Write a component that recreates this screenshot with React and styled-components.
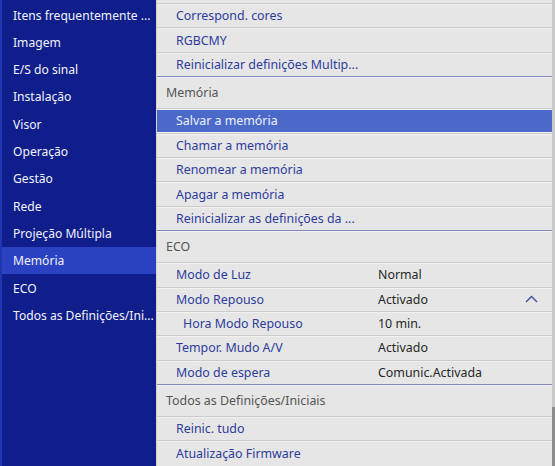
import React from "react";
import styled, { createGlobalStyle } from "styled-components";

const Global = createGlobalStyle`
  html, body { margin: 0; padding: 0; background: #e6e6e6; }
  body { font-family: "Noto Sans", "Open Sans", sans-serif; }
  * { box-sizing: border-box; }
`;

const Screen = styled.div`
  display: flex;
  width: 555px;
  height: 466px;
  overflow: hidden;
  font-size: 12.4px;
`;

const Sidebar = styled.nav`
  width: 156px;
  flex: none;
  background: #0f1e8b;
  border-left: 2px solid #1f36b0;
  padding-top: 1.4px;
  display: flex;
  flex-direction: column;
  font-size: 12.1px;
`;

const SideItem = styled.div`
  height: 27.3px;
  flex: none;
  display: flex;
  align-items: center;
  padding-left: 11px;
  color: #f2f2f8;
  white-space: nowrap;
  background: ${(p) => (p.$active ? "#2a41c2" : "transparent")};
`;

const Panel = styled.div`
  flex: 1;
  display: flex;
  background: #e6e6e6;
  border-left: 1px solid #d4d4d4;
`;

const List = styled.div`
  flex: 1;
  display: flex;
  flex-direction: column;
  padding-top: 3px;
`;

const Row = styled.div`
  height: ${(p) => (p.$header ? "32px" : "24.4px")};
  flex: none;
  display: flex;
  align-items: center;
  padding-left: ${(p) => (p.$header ? "9px" : p.$sub ? "26px" : "19px")};
  padding-right: 14px;
  border-top: ${(p) => (p.$section ? "1px solid #7f88b8" : "1px solid #cbcbcb")};
  color: ${(p) => (p.$header ? "#555" : p.$selected ? "#eef0ff" : "#2d3c9c")};
  background: ${(p) => (p.$selected ? "#4b69c9" : "transparent")};
  box-shadow: ${(p) =>
    p.$selected ? "inset 0 1px 0 #f2f2f2, inset 0 -1px 0 #f2f2f2" : "inset 0 1px 0 #f1f1f1"};
  white-space: nowrap;
`;

const Label = styled.span`
  width: ${(p) => (p.$sub ? "195px" : "202px")};
  flex: none;
`;

const Value = styled.span`
  flex: 1;
  color: #262626;
`;

const Chevron = styled.svg`
  width: 13px;
  height: 8px;
  flex: none;
`;

const Track = styled.div`
  width: 3px;
  flex: none;
  background: #c9c9c9;
  display: flex;
  flex-direction: column;
  padding-top: 407px;
`;

const Thumb = styled.div`
  flex: 1;
  background: #8c8c8c;
`;

const side = [
  "Itens frequentemente ...",
  "Imagem",
  "E/S do sinal",
  "Instalação",
  "Visor",
  "Operação",
  "Gestão",
  "Rede",
  "Projeção Múltipla",
  "Memória",
  "ECO",
  "Todos as Definições/Ini...",
];

const rows = [
  { label: "Correspond. cores" },
  { label: "RGBCMY" },
  { label: "Reinicializar definições Multip..." },
  { label: "Memória", header: true, section: true },
  { label: "Salvar a memória", selected: true },
  { label: "Chamar a memória" },
  { label: "Renomear a memória" },
  { label: "Apagar a memória" },
  { label: "Reinicializar as definições da ..." },
  { label: "ECO", header: true, section: true },
  { label: "Modo de Luz", value: "Normal" },
  { label: "Modo Repouso", value: "Activado", chevron: true },
  { label: "Hora Modo Repouso", value: "10 min.", sub: true },
  { label: "Tempor. Mudo A/V", value: "Activado" },
  { label: "Modo de espera", value: "Comunic.Activada" },
  { label: "Todos as Definições/Iniciais", header: true, section: true },
  { label: "Reinic. tudo" },
  { label: "Atualização Firmware" },
];

export default function App() {
  return (
    <>
      <Global />
      <Screen>
        <Sidebar>
          {side.map((s) => (
            <SideItem key={s} $active={s === "Memória"}>
              {s}
            </SideItem>
          ))}
        </Sidebar>
        <Panel>
          <List>
            {rows.map((r, i) => (
              <Row
                key={i}
                $header={r.header}
                $section={r.section}
                $selected={r.selected}
                $sub={r.sub}
              >
                {r.value !== undefined ? (
                  <>
                    <Label $sub={r.sub}>{r.label}</Label>
                    <Value>{r.value}</Value>
                    {r.chevron && (
                      <Chevron viewBox="0 0 13 8">
                        <polyline
                          points="1,7 6.5,1.5 12,7"
                          fill="none"
                          stroke="#3b4aa3"
                          strokeWidth="1.4"
                        />
                      </Chevron>
                    )}
                  </>
                ) : (
                  r.label
                )}
              </Row>
            ))}
          </List>
          <Track>
            <Thumb />
          </Track>
        </Panel>
      </Screen>
    </>
  );
}
